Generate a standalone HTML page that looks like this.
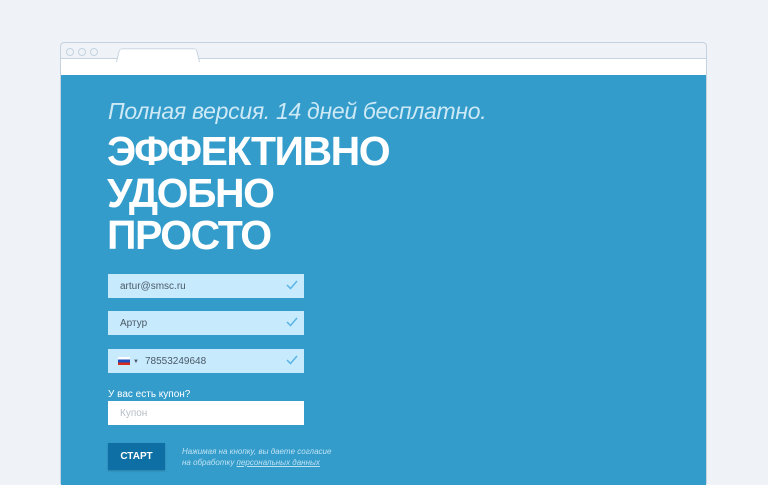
<!DOCTYPE html>
<html><head><meta charset="utf-8"><style>
body{margin:0;width:768px;height:478px;background:#eff3f7;overflow:hidden;font-family:"Liberation Sans",sans-serif;position:relative}
.frame{position:absolute;left:60px;top:42px;width:645px;height:440px;border:1px solid #c5d2df;border-radius:4px 4px 0 0;background:#eff3f7}
.dot{position:absolute;top:5px;width:6px;height:6px;border:1px solid #c5d2df;border-radius:50%}
.tab{position:absolute;left:55px;top:4px;width:82px;height:14px;background:#fff;border:1px solid #c5d2df;border-bottom:none;border-radius:3px 3px 0 0;transform:perspective(30px) rotateX(10deg);transform-origin:bottom}
.addr{position:absolute;left:0;top:15px;width:645px;height:16px;background:#fff;border-top:1px solid #c5d2df;border-bottom:1px solid #c5d2df}
.blue{position:absolute;left:0;top:32px;width:645px;height:410px;background:#339ccb}
.t{position:absolute;color:#fff;white-space:nowrap}
.inp{position:absolute;left:47px;width:196px;height:24px;background:#c8eafd;font-size:10px;color:#4a5a66;line-height:26px;box-sizing:border-box;padding-left:12px}
.chk{position:absolute;right:6px;top:5px}
</style></head><body>
<div class="frame">
<div class="dot" style="left:5px"></div><div class="dot" style="left:17px"></div><div class="dot" style="left:29px"></div>
<div class="addr"></div>
<div class="tab"></div>
<div class="blue">
<div class="t" style="left:47px;top:23px;font-size:23px;font-style:italic;font-weight:300;color:#cde9f6;letter-spacing:-0.3px">Полная версия. 14 дней бесплатно.</div>
<div class="t" style="left:46px;top:55px;font-size:41px;font-weight:bold;line-height:42px;letter-spacing:-1.5px">ЭФФЕКТИВНО<br>УДОБНО<br>ПРОСТО</div>
<div class="inp" style="top:199px">artur@smsc.ru<svg class="chk" width="12" height="12" viewBox="0 0 12 12"><path d="M1 6l3.5 3.5L11 2" stroke="#5ab5e6" stroke-width="1.5" fill="none"/></svg></div>
<div class="inp" style="top:236px">Артур<svg class="chk" width="12" height="12" viewBox="0 0 12 12"><path d="M1 6l3.5 3.5L11 2" stroke="#5ab5e6" stroke-width="1.5" fill="none"/></svg></div>
<div class="inp" style="top:274px;padding-left:37px"><span style="position:absolute;left:10px;top:8px;width:12px;height:8px;background:linear-gradient(#fff 33%,#1c4fbd 33%,#1c4fbd 66%,#d52b1e 66%)"></span><span style="position:absolute;left:25px;top:0;font-size:6px">▼</span>78553249648<svg class="chk" width="12" height="12" viewBox="0 0 12 12"><path d="M1 6l3.5 3.5L11 2" stroke="#5ab5e6" stroke-width="1.5" fill="none"/></svg></div>
<div class="t" style="left:47px;top:314px;font-size:10px">У вас есть купон?</div>
<div class="inp" style="top:326px;background:#fff;color:#b5bec6">Купон</div>
<div class="t" style="left:47px;top:368px;width:57px;height:27px;background:#0d6fa3;font-size:10px;font-weight:bold;line-height:27px;text-align:center;box-shadow:0 1px 2px rgba(0,0,0,.2)">СТАРТ</div>
<div class="t" style="left:121px;top:371px;font-size:8px;font-style:italic;color:#bfe2f3;line-height:11px">Нажимая на кнопку, вы даете согласие<br>на обработку <u>персональных данных</u></div>
</div></div>
</body></html>
